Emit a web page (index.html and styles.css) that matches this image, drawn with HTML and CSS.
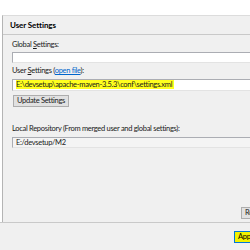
FILE: index.html
```html
<!DOCTYPE html>
<html lang="en">
<head>
  <meta charset="UTF-8" />
  <title>User Settings</title>
  <link rel="stylesheet" href="styles.css">
</head>
<body>
  <div class="dialog">
    <div class="panel">
      <div class="panel-head">User Settings</div>
      <div class="panel-body">
        <div class="field-label">Global <u>S</u>ettings:</div>
        <div class="textbox"></div>

        <div class="field-label second">User <u>S</u>ettings (<a href="#" class="link">open file</a>):</div>
        <div class="textbox tall"><span class="hilite">E:\devsetup\apache-maven-3.5.3\conf\settings.xml</span></div>

        <button class="btn update">Update Settings</button>

        <div class="field-label repo">Local Repository (From merged user and global settings):</div>
        <div class="textbox readonly">E:/devsetup/M2</div>

        <div class="reindex-row">
          <button class="btn">Reindex</button>
        </div>
      </div>
    </div>
    <div class="footer">
      <button class="btn apply">Apply</button>
    </div>
  </div>
</body>
</html>
```

FILE: styles.css
```css
html, body {
  margin: 0;
  padding: 0;
  background: #fff;
  overflow: hidden;
}
body {
  font-family: Lato, 'Open Sans', sans-serif;
  font-size: 7.5px;
  letter-spacing: -0.3px;
  color: #1a1a1a;
  width: 250px;
  height: 250px;
}
.dialog {
  width: 330px;
  padding-top: 15px;
}
.panel {
  margin-left: 2px;
  height: 206px;
  background: #f0f0f0;
  border-left: 1px solid #b4b4b4;
  border-top: 1px solid #dcdcdc;
}
.panel-head {
  height: 18px;
  line-height: 18px;
  padding-left: 7px;
  font-size: 8px;
  font-weight: 700;
  letter-spacing: -0.1px;
  color: #000;
  border-bottom: 1px solid #c9c9c9;
}
.panel-body {
  padding: 5px 0 0 9px;
}
.field-label {
  height: 10px;
  line-height: 10px;
  white-space: nowrap;
}
.field-label.second {
  margin-top: 3px;
}
.field-label.repo {
  margin-top: 17px;
}
.link {
  color: #0066cc;
}
.textbox {
  margin-top: 2px;
  height: 9px;
  line-height: 9px;
  background: #fff;
  border: 1px solid #abadb3;
  border-bottom-color: #e3e3e3;
  padding-left: 3px;
  white-space: nowrap;
}
.textbox.tall {
  margin-top: 3px;
  height: 10px;
  line-height: 10px;
}
.textbox.readonly {
  background: #f4f4f4;
  margin-top: 3px;
}
.hilite {
  background: #ffff1e;
  padding-right: 2px;
}
.btn {
  font-family: inherit;
  font-size: 7.5px;
  letter-spacing: inherit;
  color: #1a1a1a;
  background: #e1e1e1;
  border: 1px solid #adadad;
  padding: 0 3px;
  height: 12px;
  line-height: 10px;
  margin: 0;
}
.btn.update {
  display: block;
  margin-top: 4px;
  margin-left: 1px;
}
.reindex-row {
  margin-top: 59px;
  padding-left: 229px;
}
.footer {
  border-top: 1px solid #c9c9c9;
  background: #f0f0f0;
  height: 30px;
  padding: 8px 0 0 234px;
  box-sizing: border-box;
}
.btn.apply {
  background: #f2f200;
  border: 1px solid #0078d7;
  color: #000;
}
```
